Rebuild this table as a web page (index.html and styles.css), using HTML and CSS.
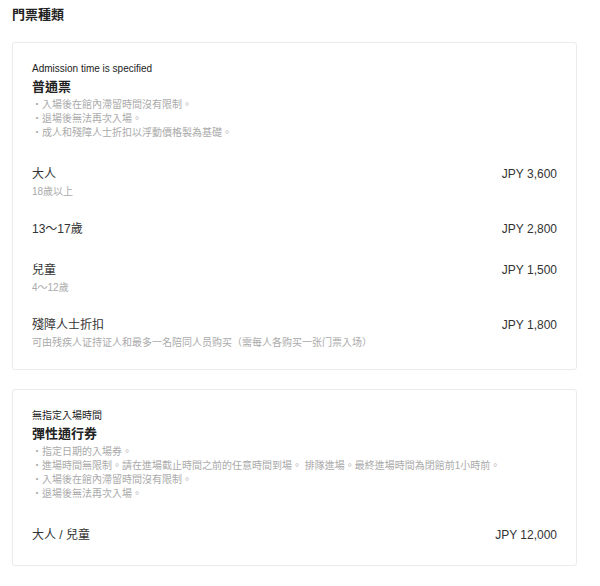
FILE: index.html
```html
<!DOCTYPE html>
<html lang="zh-Hant">
<head>
<meta charset="utf-8">
<title>門票種類</title>
<link rel="stylesheet" href="styles.css">
</head>
<body>
<div class="page">
  <h2 class="page-title">門票種類</h2>

  <section class="card">
    <div class="card-label">Admission time is specified</div>
    <h3 class="card-title">普通票</h3>
    <ul class="notes">
      <li>・入場後在館內滯留時間沒有限制。</li>
      <li>・退場後無法再次入場。</li>
      <li>・成人和殘障人士折扣以浮動價格製為基礎。</li>
    </ul>
    <div class="rows">
      <div class="row">
        <div class="row-main"><span class="name">大人</span><span class="price">JPY 3,600</span></div>
        <div class="sub">18歲以上</div>
      </div>
      <div class="row">
        <div class="row-main"><span class="name">13〜17歲</span><span class="price">JPY 2,800</span></div>
      </div>
      <div class="row">
        <div class="row-main"><span class="name">兒童</span><span class="price">JPY 1,500</span></div>
        <div class="sub">4〜12歲</div>
      </div>
      <div class="row">
        <div class="row-main"><span class="name">殘障人士折扣</span><span class="price">JPY 1,800</span></div>
        <div class="sub">可由残疾人证持证人和最多一名陪同人员购买（需每人各购买一张门票入场）</div>
      </div>
    </div>
  </section>

  <section class="card">
    <div class="card-label">無指定入場時間</div>
    <h3 class="card-title">彈性通行券</h3>
    <ul class="notes">
      <li>・指定日期的入場券。</li>
      <li>・進場時間無限制。請在進場截止時間之前的任意時間到場。 排隊進場。最終進場時間為閉館前1小時前。</li>
      <li>・入場後在館內滯留時間沒有限制。</li>
      <li>・退場後無法再次入場。</li>
    </ul>
    <div class="rows">
      <div class="row">
        <div class="row-main"><span class="name">大人 / 兒童</span><span class="price">JPY 12,000</span></div>
      </div>
    </div>
  </section>
</div>
</body>
</html>
```

FILE: styles.css
```css
html, body {
  margin: 0;
  padding: 0;
  background: #fff;
}
body {
  font-family: "Liberation Sans", Arial, "Noto Sans CJK TC", sans-serif;
  color: #333;
}
.page {
  padding: 5px 23px 0 12px;
}
.page-title {
  margin: 0 0 17px;
  font-size: 13px;
  line-height: 20px;
  font-weight: bold;
  color: #222;
}
.card {
  border: 1px solid #ebebeb;
  border-radius: 3px;
  padding: 19px 19px 19px;
  margin-bottom: 19px;
  box-shadow: 0 0 1px rgba(0,0,0,0.04);
}
.card-label {
  font-size: 10px;
  line-height: 14px;
  color: #222;
}
.card-title {
  margin: 0;
  font-size: 13px;
  line-height: 22px;
  font-weight: bold;
  color: #222;
}
.notes {
  list-style: none;
  margin: 0;
  padding: 0;
  font-size: 10px;
  line-height: 14px;
  color: #aaa;
}
.rows {
  margin-top: 4px;
}
.row {
  padding-top: 19px;
}
.row-main {
  display: flex;
  justify-content: space-between;
  align-items: center;
  font-size: 12px;
  line-height: 22px;
  color: #333;
}
.sub {
  font-size: 10px;
  line-height: 14px;
  color: #aaa;
}
```
